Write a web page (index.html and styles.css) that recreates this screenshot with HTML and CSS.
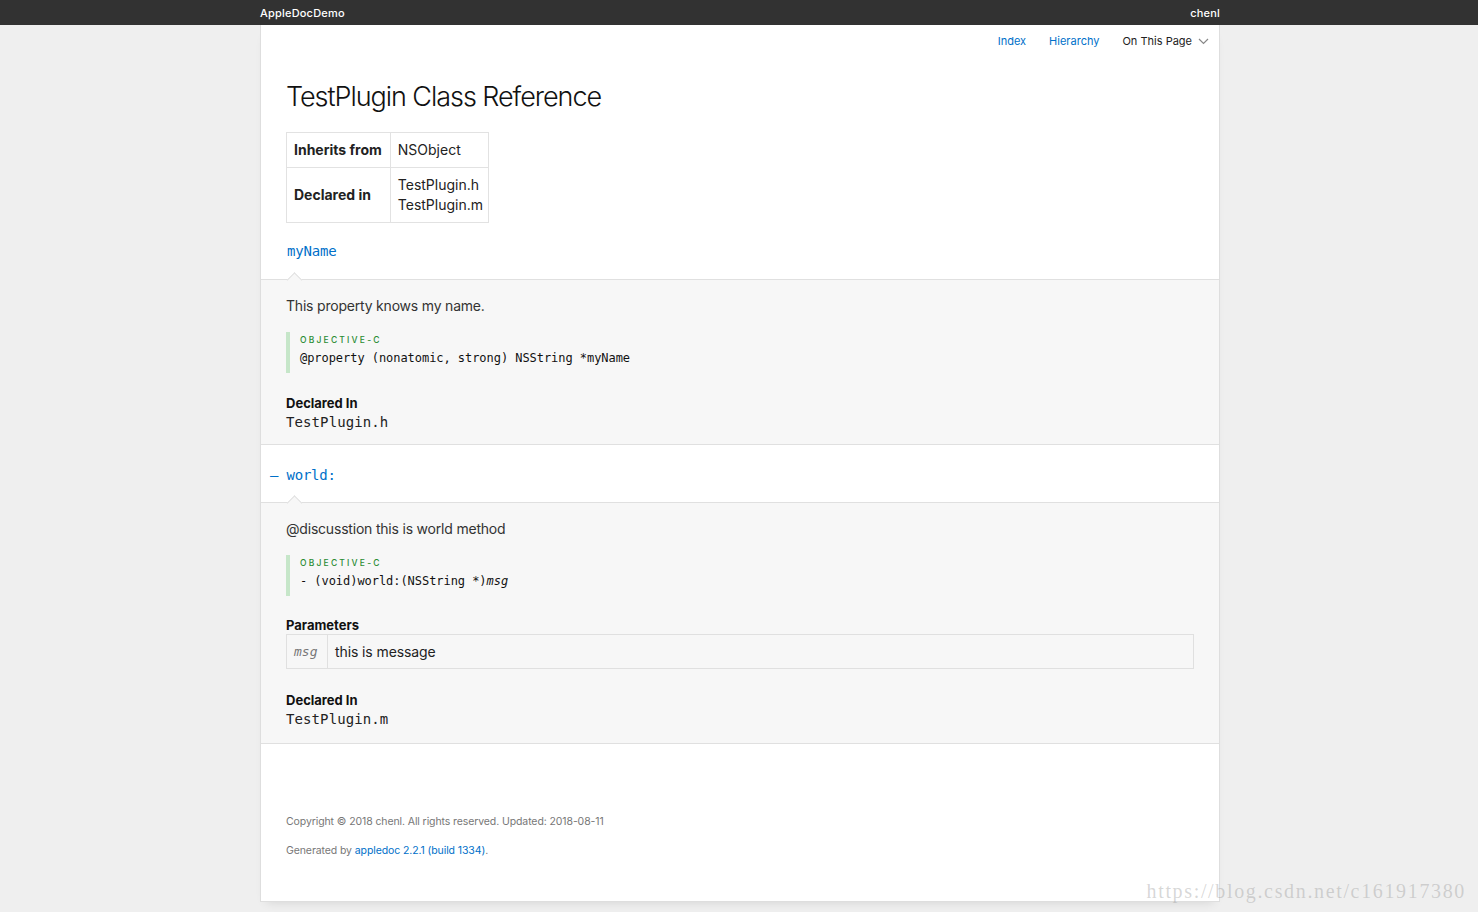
FILE: index.html
```html
<!DOCTYPE html>
<html lang="en">
<head>
<meta charset="utf-8">
<title>TestPlugin Class Reference</title>
<link rel="stylesheet" href="styles.css">
</head>
<body>
<header class="topbar">
  <div class="topbar-inner">
    <span class="project">AppleDocDemo</span>
    <span class="company">chenl</span>
  </div>
</header>
<div class="page">
  <nav class="subnav">
    <a class="navlink" href="#">Index</a>
    <a class="navlink" href="#">Hierarchy</a>
    <span class="onpage">On This Page
      <svg class="chev" width="11" height="7" viewBox="0 0 11 7"><path d="M1 1 L5.5 5.5 L10 1" fill="none" stroke="#888" stroke-width="1.2"/></svg>
    </span>
  </nav>
  <main>
    <div class="intro">
      <h1 class="title">TestPlugin Class Reference</h1>
      <table class="specs">
        <tr><th>Inherits from</th><td>NSObject</td></tr>
        <tr><th>Declared in</th><td>TestPlugin.h<br>TestPlugin.m</td></tr>
      </table>
    </div>

    <div class="item-head first">
      <a class="item-name" href="#">myName</a>
    </div>
    <div class="item-body">
      <p class="abstract">This property knows my name.</p>
      <div class="code">
        <div class="lang">OBJECTIVE-C</div>
        <div class="decl">@property (nonatomic, strong) NSString *myName</div>
      </div>
      <div class="field">
        <div class="field-title">Declared In</div>
        <div class="field-mono">TestPlugin.h</div>
      </div>
    </div>

    <div class="item-head">
      <span class="dash">–</span><a class="item-name" href="#">world:</a>
    </div>
    <div class="item-body last">
      <p class="abstract">@discusstion this is world method</p>
      <div class="code">
        <div class="lang">OBJECTIVE-C</div>
        <div class="decl">- (void)world:(NSString *)<em>msg</em></div>
      </div>
      <div class="field params">
        <div class="field-title">Parameters</div>
        <table class="param-table">
          <tr><th>msg</th><td>this is message</td></tr>
        </table>
      </div>
      <div class="field">
        <div class="field-title">Declared In</div>
        <div class="field-mono">TestPlugin.m</div>
      </div>
    </div>
  </main>
  <footer class="foot">
    <p>Copyright © 2018 chenl. All rights reserved. Updated: 2018-08-11</p>
    <p>Generated by <a href="#">appledoc 2.2.1 (build 1334)</a>.</p>
  </footer>
</div>
<div class="watermark">https://blog.csdn.net/c161917380</div>
</body>
</html>
```

FILE: styles.css
```css
* { box-sizing: border-box; }
html, body { margin: 0; padding: 0; }
body {
  background: #efefef;
  font-family: Inter, "Liberation Sans", sans-serif;
  color: #222;
  min-height: 912px;
  position: relative;
  overflow: hidden;
}
a { text-decoration: none; color: #0070c9; }

.topbar { background: #323232; height: 25px; }
.topbar-inner {
  width: 960px; margin-left: calc(50% - 479px); height: 25px;
  display: flex; justify-content: space-between; align-items: center;
  color: #fff; font-size: 11px; font-weight: 500; letter-spacing: 0.2px;
}
.page {
  width: 960px; margin-left: calc(50% - 479px);
  background: #fff;
  border: 1px solid #dedede; border-top: 0;
  height: 877px;
  box-shadow: 0 6px 10px -6px rgba(0,0,0,0.12);
}
.subnav {
  display: flex; justify-content: flex-end; align-items: center;
  height: 32px; padding-right: 10px;
  font-size: 11px;
}
.navlink { margin-right: 23px; }
.onpage { color: #222; display: flex; align-items: center; gap: 6px; }
.chev { margin-top: 1px; }

.intro { padding: 18px 25px 0; }
.title {
  font-size: 27px; font-weight: 300; margin: 0; line-height: 44px;
  letter-spacing: -1.05px; color: #111;
}
.specs {
  border-collapse: collapse; margin-top: 13px; font-size: 14px;
}
.specs th, .specs td {
  border: 1px solid #e2e2e2; text-align: left; vertical-align: middle;
  padding: 7px 6px; line-height: 20px;
}
.specs th { font-weight: 700; padding-left: 7px; padding-right: 8px; }
.specs td { font-weight: 400; padding-left: 7px; padding-right: 5px; }

.item-head {
  height: 58px; position: relative;
  border-bottom: 1px solid #e0e0e0;
  display: flex; align-items: center; padding-left: 9px;
  padding-top: 2px;
}
.item-head.first { height: 57px; padding-left: 26px; padding-top: 0; }
.item-head::after {
  content: ""; position: absolute; left: 28px; bottom: -1px;
  width: 10px; height: 10px; background: #f7f7f7;
  border-left: 1px solid #e0e0e0; border-top: 1px solid #e0e0e0;
  transform: translateY(50%) rotate(45deg);
  transform-origin: center;
}
.dash { color: #0070c9; font-family: "DejaVu Sans Mono", monospace; font-size: 14px; margin-right: 8px; }
.item-name {
  font-family: "DejaVu Sans Mono", monospace; font-size: 14px; letter-spacing: -0.2px;
}
.item-body {
  background: #f7f7f7; border-bottom: 1px solid #e0e0e0;
  padding: 16px 25px 11px;
}
.item-body.last { padding-bottom: 13px; }
.abstract { margin: 0; font-size: 14px; line-height: 20px; color: #333; letter-spacing: -0.2px; }
.code {
  margin-top: 16px; border-left: 4px solid #c6e6c9;
  padding: 1px 0 3px 10px;
}
.lang {
  font-size: 8.5px; letter-spacing: 2.2px; color: #2a8c33; line-height: 13px;
  font-weight: 500; margin-top: 1px;
}
.decl {
  font-family: "DejaVu Sans Mono", monospace; font-size: 12px; line-height: 23px;
  color: #111; letter-spacing: -0.05px;
}
.decl em { font-style: oblique; }
.field { margin-top: 22px; }
.field-title { font-size: 13px; font-weight: 700; line-height: 16px; color: #111; }
.field-mono {
  font-family: "DejaVu Sans Mono", monospace; font-size: 14px; line-height: 22px;
  color: #222; letter-spacing: 0.1px;
}
.params { margin-top: 21px; }
.params + .field { margin-top: 23px; }
.param-table {
  width: 100%; border-collapse: collapse; margin-top: 1px;
  font-size: 14px;
}
.param-table th, .param-table td {
  border: 1px solid #e0e0e0; text-align: left; padding: 7px 7px; line-height: 19px;
}
.param-table th {
  width: 41px; font-family: "DejaVu Sans Mono", monospace; font-style: oblique;
  font-weight: 400; color: #777; font-size: 13px;
}
.param-table td { color: #222; letter-spacing: -0.1px; }

.foot { padding: 70px 25px 0; font-size: 10.5px; color: #777; letter-spacing: -0.1px; }
.foot p { margin: 0 0 14px; line-height: 15px; }

.watermark {
  position: absolute; right: 12px; top: 880px;
  font-family: "Liberation Serif", serif; font-size: 20px; color: rgba(150,150,150,0.38);
  letter-spacing: 1.65px;
}
```
